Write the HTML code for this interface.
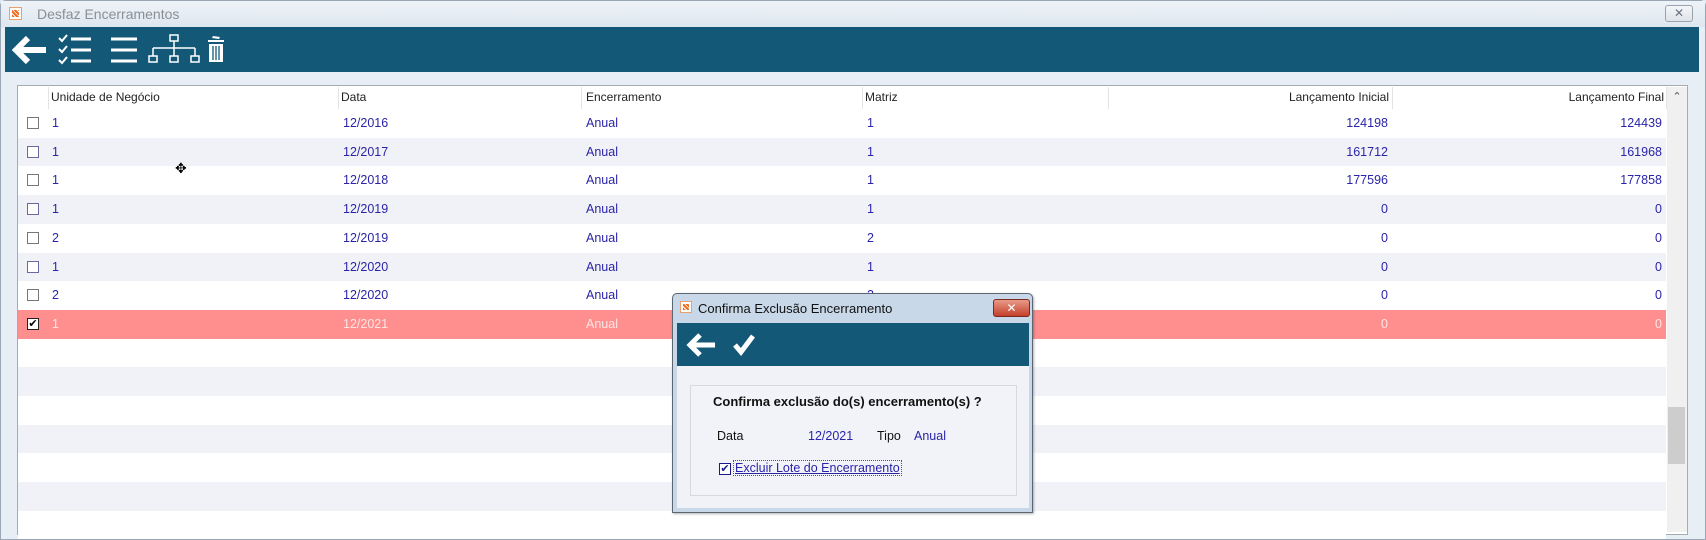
<!DOCTYPE html>
<html><head><meta charset="utf-8"><style>
*{margin:0;padding:0;box-sizing:border-box}
body{width:1706px;height:529px;overflow:hidden;background:#dfe7f0;font-family:"Liberation Sans","DejaVu Sans",sans-serif;position:relative}
.abs{position:absolute}
.win{left:0;top:0;width:1706px;height:540px;background:#e8eef5;border:1px solid #9aa6b4;border-radius:6px 6px 0 0}
.title{left:1px;top:1px;width:1704px;height:26px;background:linear-gradient(#eef3f8,#dde6ef)}
.tb{left:5px;top:27px;width:1694px;height:45px;background:#145878}
.grid{left:17px;top:85px;width:1671px;height:450px;background:#fff;border:1px solid #a7abb0}
.hdr{font-size:12px;color:#222;top:90px}
.sep{top:87px;width:1px;height:22px;background:#e2e4e8}
.row{left:18px;width:1648px;height:28.7px}
.cell{font-size:12.5px;color:#2a24a8;top:7px}
.cb{left:9px;top:8px;width:12px;height:12px;border:1px solid #777;background:#fff}
.r{text-align:right}
</style></head><body>
<div class="abs win"></div>
<div class="abs title"></div>
<div class="abs" style="left:9px;top:7px;width:13px;height:13px;background:#fff;border:1px solid #e8a070"><div style="margin:2px;width:7px;height:7px;background:repeating-linear-gradient(45deg,#f06a20 0 2px,#fff 2px 3px)"></div></div>
<div class="abs" style="left:37px;top:6px;font-size:14px;color:#8a8f96">Desfaz Encerramentos</div>
<div class="abs" style="left:1665px;top:5px;width:28px;height:17px;border:1px solid #9aa2ac;border-radius:3px;background:linear-gradient(#f4f6f8,#dfe4ea);color:#6a7280;font-size:12px;text-align:center;line-height:15px">✕</div>
<div class="abs tb"></div>
<svg class="abs" style="left:10px;top:30px" width="230" height="40" viewBox="0 0 230 40">
<g fill="none" stroke="#fff">
<path d="M6 20 H36 M18 8 L6 20 L18 32" stroke-width="6" stroke-linejoin="miter"/>
<path d="M49 8 l3 3 l5 -6 M49 19 l3 3 l5 -6 M49 30 l3 3 l5 -6" stroke-width="2"/>
<path d="M61 9 H81 M61 20 H81 M61 31 H81" stroke-width="3"/>
<path d="M101 9 H127 M101 20 H127 M101 31 H127" stroke-width="3"/>
<rect x="160" y="5" width="8" height="6" stroke-width="1.5"/>
<path d="M164 11 V18 M143 18 H185 M143 18 V26 M164 18 V26 M185 18 V26" stroke-width="1.5"/>
<rect x="139" y="26" width="8" height="6" stroke-width="1.5"/><rect x="160" y="26" width="8" height="6" stroke-width="1.5"/><rect x="181" y="26" width="8" height="6" stroke-width="1.5"/>
</g>
<g fill="#fff"><path d="M198 10 L214 10 L214 12 L198 12Z M203 6 L210 7 L209 9 L202 8Z"/><path d="M199 14 H213 V32 H199Z" /></g>
<path d="M203 16 V30 M206 16 V30 M209 16 V30" stroke="#145878" stroke-width="1.3"/>
</svg>
<div class="abs grid"></div>
<div class="abs sep" style="left:48px"></div><div class="abs sep" style="left:338px"></div><div class="abs sep" style="left:581px"></div><div class="abs sep" style="left:862px"></div><div class="abs sep" style="left:1108px"></div><div class="abs sep" style="left:1392px"></div><div class="abs sep" style="left:1666px"></div>
<div class="abs hdr" style="left:51px">Unidade de Negócio</div>
<div class="abs hdr" style="left:341px">Data</div>
<div class="abs hdr" style="left:586px">Encerramento</div>
<div class="abs hdr" style="left:865px">Matriz</div>
<div class="abs hdr r" style="left:1189px;width:200px">Lançamento Inicial</div>
<div class="abs hdr r" style="left:1464px;width:200px">Lançamento Final</div>
<div class="abs" style="left:1667px;top:87px;width:20px;height:445px;background:#f0f0f0"></div>
<div class="abs" style="left:1667px;top:90px;width:20px;text-align:center;font-size:11px;color:#555">⌃</div>
<div class="abs" style="left:1668px;top:407px;width:17px;height:57px;background:#cdcdcd"></div>

<div class="abs row" style="top:109px;background:#fff"><div class="abs cb"></div><div class="abs cell" style="left:34px">1</div><div class="abs cell" style="left:325px">12/2016</div><div class="abs cell" style="left:568px">Anual</div><div class="abs cell" style="left:849px">1</div><div class="abs cell r" style="left:1170px;width:200px">124198</div><div class="abs cell r" style="left:1444px;width:200px">124439</div></div>
<div class="abs row" style="top:137.7px;background:#f1f2f8"><div class="abs cb" style="border-color:#6a6aa0"></div><div class="abs cell" style="left:34px">1</div><div class="abs cell" style="left:325px">12/2017</div><div class="abs cell" style="left:568px">Anual</div><div class="abs cell" style="left:849px">1</div><div class="abs cell r" style="left:1170px;width:200px">161712</div><div class="abs cell r" style="left:1444px;width:200px">161968</div></div>
<div class="abs row" style="top:166.4px;background:#fff"><div class="abs cb"></div><div class="abs cell" style="left:34px">1</div><div class="abs cell" style="left:325px">12/2018</div><div class="abs cell" style="left:568px">Anual</div><div class="abs cell" style="left:849px">1</div><div class="abs cell r" style="left:1170px;width:200px">177596</div><div class="abs cell r" style="left:1444px;width:200px">177858</div></div>
<div class="abs row" style="top:195.1px;background:#f1f2f8"><div class="abs cb" style="border-color:#6a6aa0"></div><div class="abs cell" style="left:34px">1</div><div class="abs cell" style="left:325px">12/2019</div><div class="abs cell" style="left:568px">Anual</div><div class="abs cell" style="left:849px">1</div><div class="abs cell r" style="left:1170px;width:200px">0</div><div class="abs cell r" style="left:1444px;width:200px">0</div></div>
<div class="abs row" style="top:223.8px;background:#fff"><div class="abs cb"></div><div class="abs cell" style="left:34px">2</div><div class="abs cell" style="left:325px">12/2019</div><div class="abs cell" style="left:568px">Anual</div><div class="abs cell" style="left:849px">2</div><div class="abs cell r" style="left:1170px;width:200px">0</div><div class="abs cell r" style="left:1444px;width:200px">0</div></div>
<div class="abs row" style="top:252.5px;background:#f1f2f8"><div class="abs cb" style="border-color:#6a6aa0"></div><div class="abs cell" style="left:34px">1</div><div class="abs cell" style="left:325px">12/2020</div><div class="abs cell" style="left:568px">Anual</div><div class="abs cell" style="left:849px">1</div><div class="abs cell r" style="left:1170px;width:200px">0</div><div class="abs cell r" style="left:1444px;width:200px">0</div></div>
<div class="abs row" style="top:281.2px;background:#fff"><div class="abs cb"></div><div class="abs cell" style="left:34px">2</div><div class="abs cell" style="left:325px">12/2020</div><div class="abs cell" style="left:568px">Anual</div><div class="abs cell" style="left:849px">2</div><div class="abs cell r" style="left:1170px;width:200px">0</div><div class="abs cell r" style="left:1444px;width:200px">0</div></div>
<div class="abs row" style="top:309.9px;background:#ff8f8f"><div class="abs cb" style="border-color:#222;font-size:11px;line-height:10px;text-align:center;color:#000">✔</div><div class="abs cell" style="left:34px;color:#ffe4e4">1</div><div class="abs cell" style="left:325px;color:#ffe4e4">12/2021</div><div class="abs cell" style="left:568px;color:#ffe4e4">Anual</div><div class="abs cell r" style="left:1170px;width:200px;color:#ffe4e4">0</div><div class="abs cell r" style="left:1444px;width:200px;color:#ffe4e4">0</div></div>
<div class="abs row" style="top:338.6px;background:#fff"></div>
<div class="abs row" style="top:367.3px;background:#f1f2f8"></div>
<div class="abs row" style="top:396px;background:#fff"></div>
<div class="abs row" style="top:424.7px;background:#f1f2f8"></div>
<div class="abs row" style="top:453.4px;background:#fff"></div>
<div class="abs row" style="top:482.1px;background:#f1f2f8"></div>
<div class="abs row" style="top:510.8px;background:#fff"></div>
<div class="abs" style="left:175px;top:160px;font-size:14px;color:#000">✥</div>

<!-- dialog -->
<div class="abs" style="left:672px;top:293px;width:361px;height:220px;background:#c9d8e8;border:1px solid #5c6670;border-radius:5px 5px 0 0;box-shadow:1px 1px 2px rgba(0,0,0,.3)"></div>
<div class="abs" style="left:680px;top:301px;width:12px;height:12px;background:#fff;border:1px solid #e8a070"><div style="margin:2px;width:6px;height:6px;background:repeating-linear-gradient(45deg,#f06a20 0 2px,#fff 2px 3px)"></div></div>
<div class="abs" style="left:698px;top:301px;font-size:13px;color:#111">Confirma Exclusão Encerramento</div>
<div class="abs" style="left:993px;top:299px;width:37px;height:18px;border:1px solid #7a2a20;border-radius:3px;background:linear-gradient(#e89a88,#c4402a);color:#fff;font-size:12px;font-weight:bold;text-align:center;line-height:16px">✕</div>
<div class="abs" style="left:677px;top:323px;width:352px;height:43px;background:#145878"></div>
<svg class="abs" style="left:685px;top:328px" width="80" height="34" viewBox="0 0 80 34">
<path d="M5 17 H30 M15 7 L5 17 L15 27" fill="none" stroke="#fff" stroke-width="5"/>
<path d="M50 17 L56 24 L68 8" fill="none" stroke="#fff" stroke-width="5"/>
</svg>
<div class="abs" style="left:677px;top:366px;width:352px;height:142px;background:#f0f2f8"></div>
<div class="abs" style="left:690px;top:385px;width:327px;height:111px;border:1px solid #d6d9de;background:#f2f3f9"></div>
<div class="abs" style="left:713px;top:394px;font-size:13px;font-weight:bold;color:#111">Confirma exclusão do(s) encerramento(s) ?</div>
<div class="abs" style="left:717px;top:429px;font-size:12.5px;color:#111">Data</div>
<div class="abs" style="left:808px;top:429px;font-size:12.5px;color:#2a24a8">12/2021</div>
<div class="abs" style="left:877px;top:429px;font-size:12.5px;color:#111">Tipo</div>
<div class="abs" style="left:914px;top:429px;font-size:12.5px;color:#2a24a8">Anual</div>
<div class="abs" style="left:719px;top:463px;width:12px;height:12px;border:1px solid #1a1a8a;background:#fff;font-size:11px;line-height:10px;text-align:center;color:#1a1a8a">✔</div>
<div class="abs" style="left:733px;top:460px;font-size:12.5px;color:#2a24a8;text-decoration:underline;border:1px dotted #555;padding:0 1px">Excluir Lote do Encerramento</div>
</body></html>
